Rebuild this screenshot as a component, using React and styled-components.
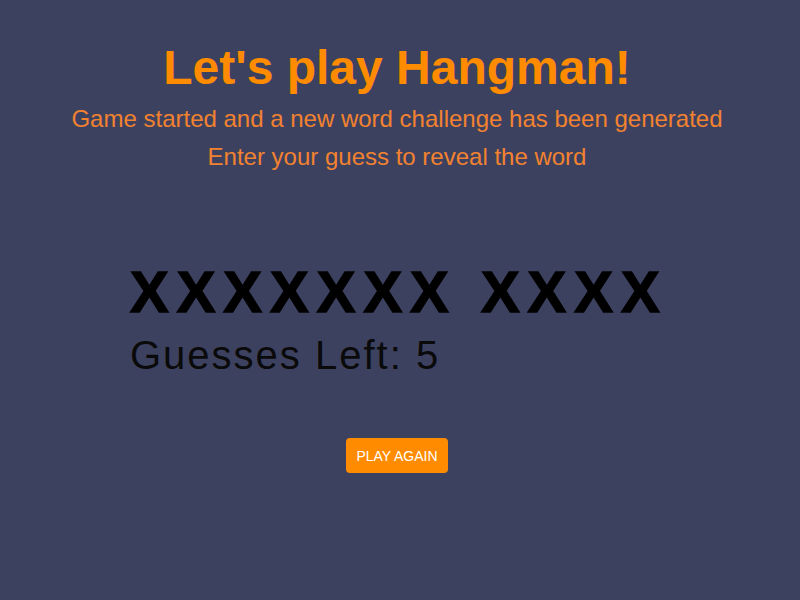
import React from 'react';
import styled, { createGlobalStyle } from 'styled-components';

const GlobalStyle = createGlobalStyle`
html, body {
  margin:0;
  padding:0;
  background:#3d4160;
  font-family:"Liberation Sans", Arial, sans-serif;
}
`

const Page = styled.div`
display:flex;
flex-direction:column;
align-items:center;
box-sizing:border-box;
width:800px;
height:600px;
padding-right:6px;
background:#3d4160;
`
const Title = styled.h1`
margin:40px 0 0;
font-size:48px;
font-weight:bold;
color:#ff8c00;
line-height:56px;
`
const Subtitle = styled.p`
margin:${props => props.first ? '9px' : '10px'} 0 0;
font-size:24px;
color:#f2822f;
line-height:28px;
`
const Board = styled.div`
align-self:flex-start;
margin:88px 0 0 130px;
display:flex;
flex-direction:column;
`
const Word = styled.div`
font-size:58px;
font-weight:bold;
color:#000;
letter-spacing:8px;
line-height:66px;
-webkit-text-stroke:1.5px #000;
`
const Guesses = styled.div`
margin-top:7px;
font-size:40px;
color:#0a0a0a;
letter-spacing:2px;
line-height:46px;
`
const Button = styled.button`
margin-top:60px;
background:#ff8c00;
color:#fff;
border:none;
border-radius:4px;
padding:0 10px;
height:35px;
font-family:"Liberation Sans", Arial, sans-serif;
font-size:14px;
cursor:pointer;
`

export default function App() {
    return (
        <Page>
            <GlobalStyle />
            <Title>Let's play Hangman!</Title>
            <Subtitle first>Game started and a new word challenge has been generated</Subtitle>
            <Subtitle>Enter your guess to reveal the word</Subtitle>
            <Board>
                <Word>XXXXXXX XXXX</Word>
                <Guesses>Guesses Left: 5</Guesses>
            </Board>
            <Button>PLAY AGAIN</Button>
        </Page>
    );
}
